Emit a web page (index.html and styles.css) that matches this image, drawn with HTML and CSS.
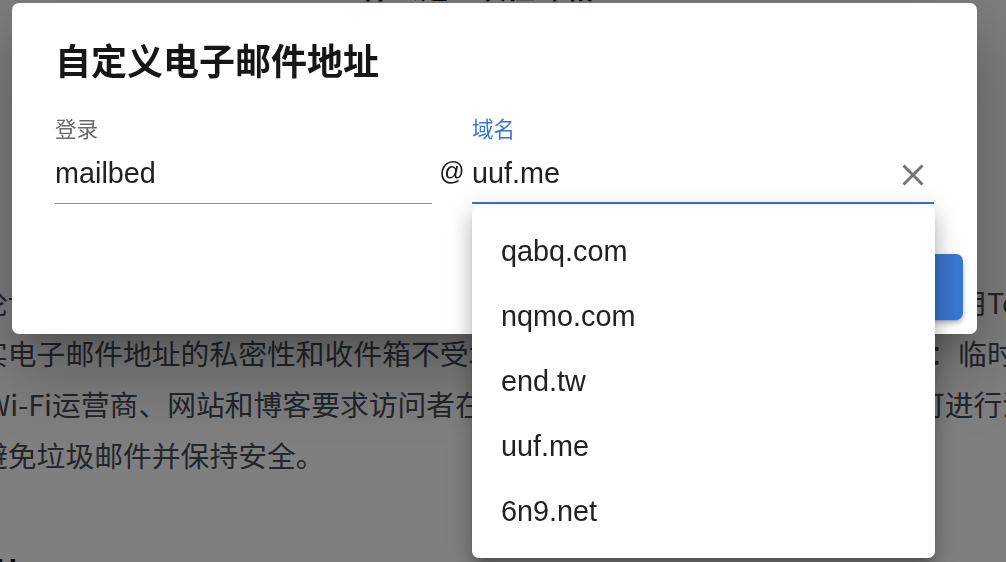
FILE: index.html
```html
<!DOCTYPE html>
<html lang="zh-CN">
<head>
<meta charset="utf-8">
<title>自定义电子邮件地址</title>
<link rel="stylesheet" href="styles.css">
</head>
<body>
<div class="page">
  <h1 class="page-title">什么是一次性邮箱？</h1>
  <div class="page-text">
    <div class="line">论访问哪个网站，临时邮件都能保护您的真实身份，而且无需注册，您还可使用Telegram机器人接收邮件。</div>
    <div class="line">实电子邮件地址的私密性和收件箱不受垃圾邮件和广告骚扰，有效保护隐私：临时邮件地址</div>
    <div class="line line-latin">Wi-Fi运营商、网站和博客要求访问者在使用前提供电子邮件地址，然后才可进行注册</div>
    <div class="line">避免垃圾邮件并保持安全。</div>
  </div>
  <h2 class="page-sub">How</h2>
</div>

<div class="backdrop"></div>

<div class="dialog" role="dialog">
  <h2 class="dialog-title">自定义电子邮件地址</h2>
  <div class="dialog-content">
    <div class="field">
      <label class="field-label">登录</label>
      <div class="field-input"><span class="field-value">mailbed</span></div>
    </div>
    <div class="at">@</div>
    <div class="field field-focused">
      <label class="field-label">域名</label>
      <div class="field-input">
        <span class="field-value">uuf.me</span>
        <svg class="clear" viewBox="0 0 24 24" aria-hidden="true"><path d="M19 6.41 17.59 5 12 10.59 6.41 5 5 6.41 10.59 12 5 17.59 6.41 19 12 13.41 17.59 19 19 17.59 13.41 12z"/></svg>
      </div>
    </div>
  </div>
  <div class="dialog-actions">
    <button class="btn">确定</button>
  </div>
</div>

<ul class="menu">
  <li class="menu-item">qabq.com</li>
  <li class="menu-item">nqmo.com</li>
  <li class="menu-item">end.tw</li>
  <li class="menu-item">uuf.me</li>
  <li class="menu-item">6n9.net</li>
</ul>
</body>
</html>
```

FILE: styles.css
```css
html, body {
  margin: 0;
  padding: 0;
  width: 1006px;
  height: 562px;
  overflow: hidden;
  background: #ffffff;
}

.page {
  font-family: "Noto Sans CJK SC", sans-serif;
  color: #474c55;
}

.page-title {
  margin: -32px 0 0;
  padding-right: 22px;
  text-align: center;
  font-size: 29px;
  line-height: 36px;
  font-weight: 700;
  color: #111;
}

.page-text {
  margin: 272px 0 0 -21px;
  font-size: 28.8px;
  line-height: 51px;
}

.line {
  white-space: nowrap;
}

.line-latin {
  padding-left: 6px;
}

.page-sub {
  margin: 71px 0 0 -4px;
  font-family: "Liberation Sans", sans-serif;
  font-size: 29px;
  line-height: 36px;
  font-weight: 700;
  color: #111;
}

.backdrop {
  position: fixed;
  inset: 0;
  background: rgba(0, 0, 0, 0.5);
}

.dialog {
  position: absolute;
  left: 12px;
  top: 3px;
  width: 965px;
  background: #fff;
  border-radius: 7px;
  display: flex;
  flex-direction: column;
  box-shadow: 0 20px 27px -13px rgba(0,0,0,0.2), 0 43px 68px 5px rgba(0,0,0,0.14), 0 16px 83px 14px rgba(0,0,0,0.12);
}

.dialog-title {
  margin: 0;
  padding: 27px 43px 0;
  font-family: "Noto Sans CJK SC", sans-serif;
  font-size: 36px;
  line-height: 58px;
  font-weight: 700;
  color: #161616;
}

.dialog-content {
  padding: 27px 43px 36px;
  display: grid;
  grid-template-columns: 377px 40px 1fr;
}

.field {
  display: flex;
  flex-direction: column;
}

.field-label {
  font-family: "Noto Sans CJK SC", sans-serif;
  font-size: 21.6px;
  line-height: 26px;
  color: #6b6b6b;
}

.field-input {
  margin-top: 4.6px;
  padding: 7px 0 9px;
  border-bottom: 1px solid #8e8e8e;
  display: flex;
  align-items: center;
  font-family: "Liberation Sans", "Noto Sans CJK SC", sans-serif;
  font-size: 28.8px;
  line-height: 41.4px;
  color: #212121;
}

.field-value {
  flex: 1;
}

.field-focused .field-label {
  color: #3a76cf;
}

.field-focused .field-input {
  border-bottom: 2px solid #3a76cf;
  padding-bottom: 8px;
}

.clear {
  width: 36px;
  height: 36px;
  margin: 4px 3px 0 0;
  fill: #757575;
}

.at {
  align-self: end;
  text-align: center;
  font-family: "Liberation Sans", sans-serif;
  font-size: 25px;
  line-height: 30px;
  padding-bottom: 18px;
  color: #1a1a1a;
}

.dialog-actions {
  padding: 14.4px;
  display: flex;
  justify-content: flex-end;
}

.btn {
  height: 65.7px;
  min-width: 130px;
  padding: 0 29px;
  border: 0;
  border-radius: 7px;
  background: #3a76cf;
  color: #fff;
  font-family: "Noto Sans CJK SC", sans-serif;
  font-size: 25px;
  font-weight: 500;
  box-shadow: 0 5px 2px -4px rgba(0,0,0,0.2), 0 4px 4px 0 rgba(0,0,0,0.14), 0 2px 9px 0 rgba(0,0,0,0.12);
}

.menu {
  position: absolute;
  left: 472px;
  top: 205px;
  width: 463px;
  margin: 0;
  padding: 14.4px 0;
  list-style: none;
  background: #fff;
  border-radius: 7px;
  box-shadow: 0 9px 9px -5px rgba(0,0,0,0.2), 0 14px 18px 2px rgba(0,0,0,0.14), 0 5px 25px 4px rgba(0,0,0,0.12);
}

.menu-item {
  height: 64.8px;
  padding-left: 29px;
  font-family: "Liberation Sans", sans-serif;
  font-size: 28.8px;
  line-height: 64.8px;
  color: #212121;
}
```
